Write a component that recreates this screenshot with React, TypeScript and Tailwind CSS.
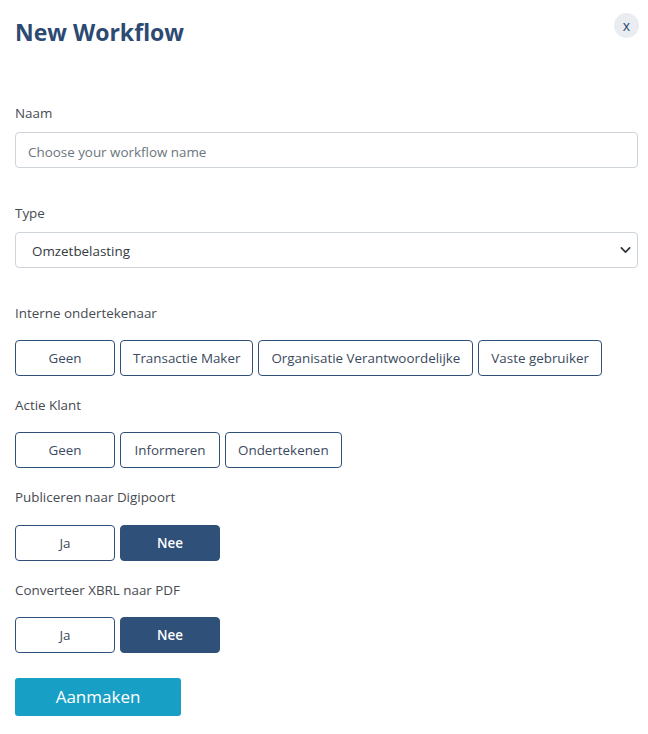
import React, { useState } from "react";

const font = { fontFamily: '"Open Sans", "Noto Sans", Arial, sans-serif' };

interface ChoiceGroupProps {
  options: string[];
  value: string;
  onChange: (v: string) => void;
}

const ChoiceGroup = ({ options, value, onChange }: ChoiceGroupProps) => {
  return (
    <div className="flex items-center gap-[5px]">
      {options.map((opt) => {
        const active = opt === value;
        return (
          <button
            key={opt}
            type="button"
            onClick={() => onChange(opt)}
            className={
              active
                ? "h-[36px] min-w-[100px] px-3 rounded-[4px] border border-[#2f5079] bg-[#2f5079] text-white text-[13.4px] font-semibold"
                : "h-[36px] min-w-[100px] px-3 rounded-[4px] border border-[#2f5079] bg-white text-[#3b4a5e] text-[13.4px]"
            }
          >
            {opt}
          </button>
        );
      })}
    </div>
  );
};

const Label = ({ children, className }: { children: React.ReactNode; className?: string }) => (
  <div className={`text-[13.4px] leading-[21px] text-[#464b52] ${className ?? ""}`}>{children}</div>
);

export default function App() {
  const [signer, setSigner] = useState("");
  const [client, setClient] = useState("");
  const [publish, setPublish] = useState("Nee");
  const [convert, setConvert] = useState("Nee");

  return (
    <div className="w-[648px] h-[734px] bg-white pl-[15px] pr-[10px] pt-[16px]" style={font}>
      <div className="flex items-start justify-between">
        <h1 className="text-[23px] leading-[32px] font-bold text-[#2c4a72]">New Workflow</h1>
        <button
          type="button"
          className="mt-[-3px] mr-[-1px] w-[25px] h-[25px] rounded-full bg-[#e9edf1] text-[#2c4a72] text-[14px] leading-none flex items-center justify-center"
        >
          x
        </button>
      </div>

      <Label className="mt-[55px] mb-[8px]">Naam</Label>
      <input
        type="text"
        placeholder="Choose your workflow name"
        className="w-full h-[36px] rounded-[4px] border border-[#ced4da] px-3 pt-[3px] text-[13.4px] text-[#495057] placeholder:text-[#6c757d] outline-none"
      />

      <Label className="mt-[35px] mb-[8px]">Type</Label>
      <div className="relative">
        <select className="w-full h-[36px] appearance-none rounded-[4px] border border-[#ced4da] bg-white px-4 pt-[3px] text-[13.4px] text-[#343a40] outline-none">
          <option>Omzetbelasting</option>
        </select>
        <svg
          className="pointer-events-none absolute right-[7px] top-1/2 -translate-y-1/2"
          width="11"
          height="11"
          viewBox="0 0 16 16"
        >
          <path d="M2 5l6 6 6-6" fill="none" stroke="#343a40" strokeWidth="2.6" strokeLinecap="round" strokeLinejoin="round" />
        </svg>
      </div>

      <Label className="mt-[35px] mb-[16px]">Interne ondertekenaar</Label>
      <ChoiceGroup
        options={["Geen", "Transactie Maker", "Organisatie Verantwoordelijke", "Vaste gebruiker"]}
        value={signer}
        onChange={setSigner}
      />

      <Label className="mt-[19px] mb-[16px]">Actie Klant</Label>
      <ChoiceGroup options={["Geen", "Informeren", "Ondertekenen"]} value={client} onChange={setClient} />

      <Label className="mt-[19px] mb-[17px]">Publiceren naar Digipoort</Label>
      <ChoiceGroup options={["Ja", "Nee"]} value={publish} onChange={setPublish} />

      <Label className="mt-[19px] mb-[16px]">Converteer XBRL naar PDF</Label>
      <ChoiceGroup options={["Ja", "Nee"]} value={convert} onChange={setConvert} />

      <button
        type="button"
        className="mt-[25px] w-[166px] h-[38px] rounded-[3px] bg-[#189fc6] text-white text-[17px]"
      >
        Aanmaken
      </button>
    </div>
  );
}
